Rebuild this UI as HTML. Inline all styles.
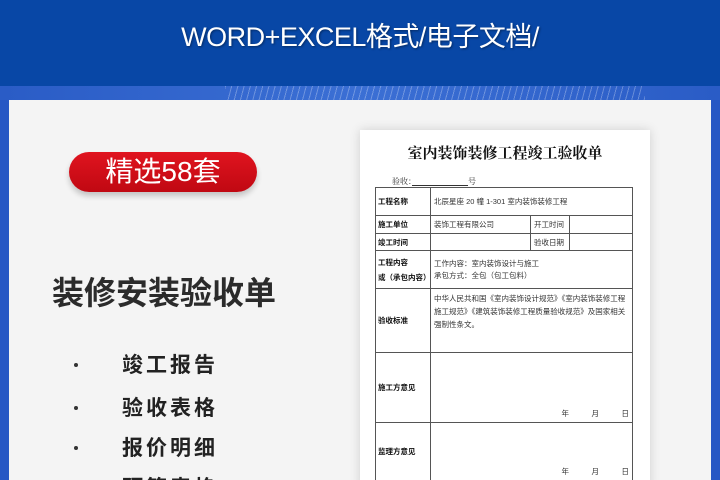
<!DOCTYPE html>
<html><head><meta charset="utf-8"><style>
*{margin:0;padding:0;box-sizing:border-box}
html,body{width:720px;height:480px;overflow:hidden}
body{background:#2757c4;font-family:"Liberation Sans","Noto Sans CJK SC",sans-serif;position:relative}
.hdr{position:absolute;left:0;top:0;width:720px;height:86px;background:#0847a6;color:#fff;font-size:27px;text-align:center;line-height:74px;letter-spacing:-0.5px;text-shadow:1px 1px 2px rgba(0,0,0,.4)}
.band{position:absolute;left:0;top:86px;width:720px;height:14px;background:linear-gradient(90deg,#2a5cc6,#3b6fd4 50%,#2a5cc6)}
.stripes{position:absolute;left:225px;top:86px;width:420px;height:14px;background:repeating-linear-gradient(105deg,rgba(255,255,255,.45) 0 1px,transparent 1px 6px);opacity:.6}
.panel{position:absolute;left:9px;top:100px;width:702px;height:380px;background:#f4f4f4}
.pill{position:absolute;left:69px;top:152px;width:188px;height:40px;border-radius:20px;background:linear-gradient(#e0141f,#c00812);color:#fff;font-size:28px;text-align:center;line-height:40px;box-shadow:0 4px 6px rgba(0,0,0,.2)}
.h1{position:absolute;left:52px;top:268px;font-size:32px;font-weight:bold;color:#2b2b2b}
.li{position:absolute;left:122px;font-size:21px;font-weight:bold;color:#222;letter-spacing:3px}
.dot{position:absolute;left:74px;width:4px;height:4px;background:#333;border-radius:50%}
.doc{position:absolute;left:360px;top:130px;width:290px;height:360px;background:#fff;box-shadow:0 0 10px rgba(0,0,0,.15);font-family:"Liberation Serif","Noto Serif CJK SC",serif}
.doc .t{position:absolute;top:12px;width:100%;text-align:center;font-size:15px;font-weight:bold;color:#111}
.doc .n{position:absolute;left:32px;top:46px;font-size:8px;color:#333}
table{position:absolute;left:15px;top:57px;width:258px;border-collapse:collapse;font-size:7.5px;color:#333;font-family:"Liberation Sans","Noto Sans CJK SC",sans-serif;table-layout:fixed}
td{border:1px solid #555;padding:0 3px;vertical-align:middle;overflow:hidden}
td.l{font-weight:bold;color:#111;white-space:nowrap;padding:0 2px}
</style></head><body>
<div class="hdr">WORD+EXCEL格式/电子文档/</div>
<div class="band"></div><div class="stripes"></div>
<div class="panel"></div>
<div class="pill">精选58套</div>
<div class="h1">装修安装验收单</div>
<div class="dot" style="top:363px"></div><div class="li" style="top:349px">竣工报告</div>
<div class="dot" style="top:406px"></div><div class="li" style="top:392px">验收表格</div>
<div class="dot" style="top:446px"></div><div class="li" style="top:432px">报价明细</div>
<div class="dot" style="top:486px"></div><div class="li" style="top:472px">预算表格</div>
<div class="doc">
<div class="t">室内装饰装修工程竣工验收单</div>
<div class="n">验收：<span style="text-decoration:underline">　　　　　　　</span>号</div>
<table>
<colgroup><col style="width:55px"><col style="width:100px"><col style="width:39px"><col></colgroup>
<tr style="height:28px"><td class="l">工程名称</td><td colspan="3">北辰星座 20 幢 1-301 室内装饰装修工程</td></tr>
<tr style="height:18px"><td class="l">施工单位</td><td>装饰工程有限公司</td><td>开工时间</td><td></td></tr>
<tr style="height:17px"><td class="l">竣工时间</td><td></td><td>验收日期</td><td></td></tr>
<tr style="height:38px"><td class="l" style="line-height:15px">工程内容<br>或（承包内容）</td><td colspan="3" style="line-height:12px">工作内容：室内装饰设计与施工<br>承包方式：全包（包工包料）</td></tr>
<tr style="height:64px"><td class="l">验收标准</td><td colspan="3" style="vertical-align:top;padding-top:3px;line-height:13px">中华人民共和国《室内装饰设计规范》《室内装饰装修工程施工规范》《建筑装饰装修工程质量验收规范》及国家相关强制性条文。</td></tr>
<tr style="height:70px"><td class="l">施工方意见</td><td colspan="3" style="vertical-align:bottom;text-align:right;padding-bottom:3px">年　　　月　　　日</td></tr>
<tr style="height:58px"><td class="l">监理方意见</td><td colspan="3" style="vertical-align:bottom;text-align:right;padding-bottom:3px">年　　　月　　　日</td></tr>
</table>
</div>
</body></html>
